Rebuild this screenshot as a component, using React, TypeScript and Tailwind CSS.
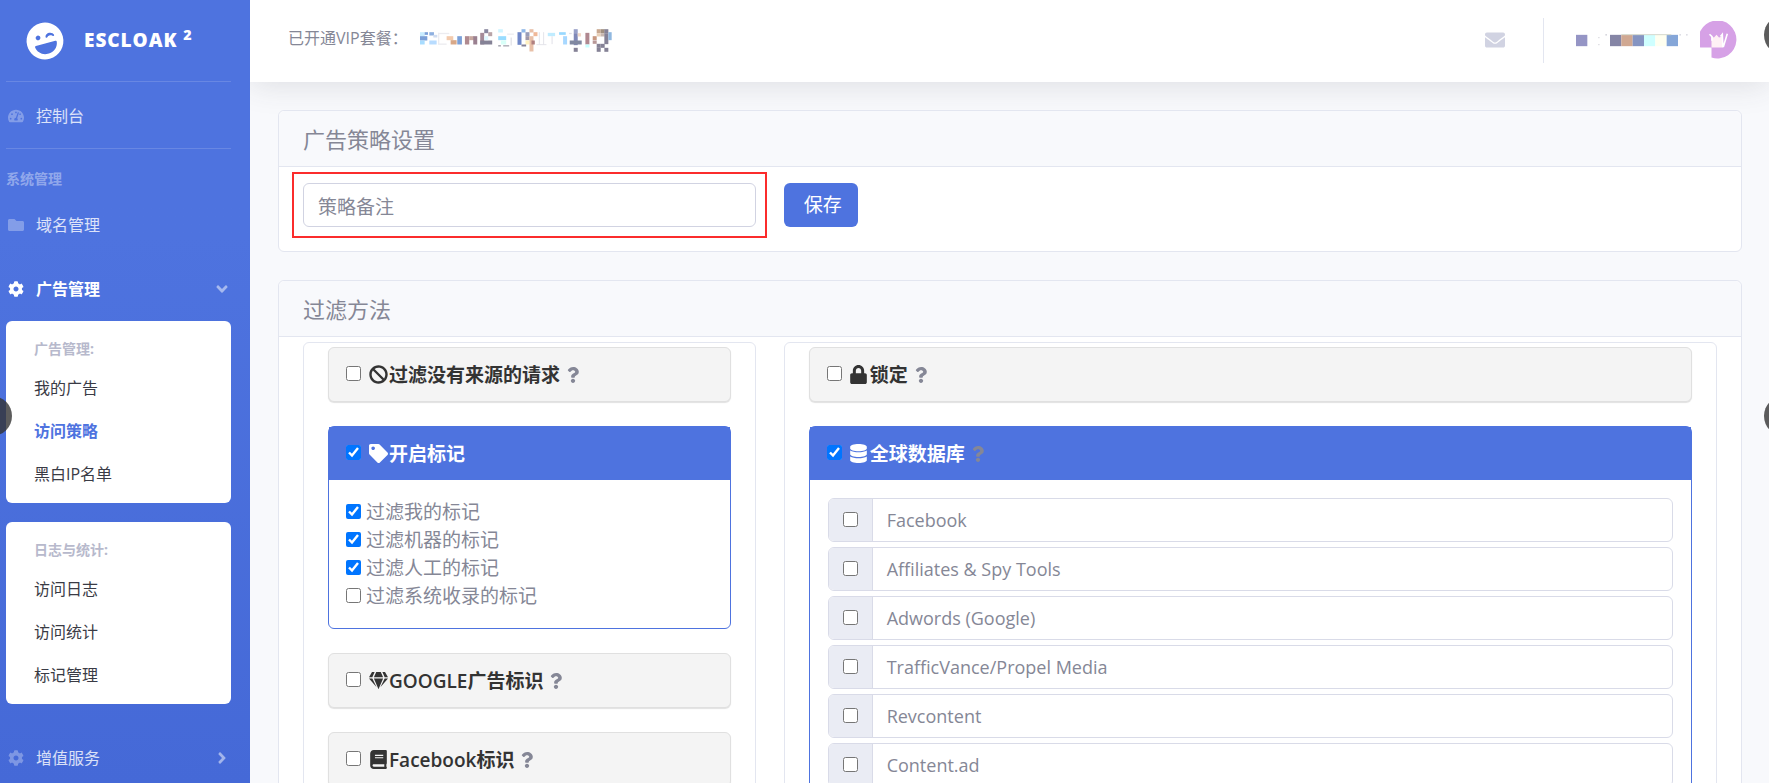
import { useState } from 'react';
import type { ReactNode } from 'react';
import type { IconType } from 'react-icons';
import {
  FaAngleDown,
  FaAngleRight,
  FaBan,
  FaBook,
  FaCog,
  FaDatabase,
  FaEnvelope,
  FaFolder,
  FaGem,
  FaLaughWink,
  FaLock,
  FaQuestion,
  FaTachometerAlt,
  FaTag,
} from 'react-icons/fa';

const databases = [
  'Facebook',
  'Affiliates & Spy Tools',
  'Adwords (Google)',
  'TrafficVance/Propel Media',
  'Revcontent',
  'Content.ad',
];

const markFilters = [
  { id: 'mark-mine', label: '过滤我的标记', checked: true },
  { id: 'mark-bot', label: '过滤机器的标记', checked: true },
  { id: 'mark-human', label: '过滤人工的标记', checked: true },
  { id: 'mark-system', label: '过滤系统收录的标记', checked: false },
];

// [x, y, width, height, color]
type Cell = [number, number, number, number, string];

const planCells: Cell[] = [
  [0, 12, 14, 12, '#c8ecff'], [0, 24, 22, 13, '#7ba0d8'], [0, 37, 14, 12, '#a8dcff'],
  [14, 12, 10, 8, '#7ba0d8'], [28, 12, 14, 10, '#8fb0e0'], [40, 20, 12, 8, '#d0dcf0'], [28, 37, 22, 12, '#b8dcff'],
  [54, 14, 34, 4, '#ececf0'], [54, 14, 4, 34, '#ececf0'], [54, 46, 26, 4, '#ececf0'],
  [80, 24, 20, 12, '#f3cbae'], [92, 36, 18, 13, '#d8a888'], [112, 24, 14, 25, '#7ba0d8'],
  [135, 24, 13, 25, '#b08a90'], [148, 24, 14, 12, '#c8a8a0'], [160, 24, 12, 25, '#9a8090'],
  [193, 3, 12, 12, '#8a88a0'], [181, 14, 12, 35, '#a58b98'], [205, 12, 12, 12, '#b8a4a8'],
  [181, 37, 36, 12, '#858296'], [193, 24, 12, 12, '#e0f8ff'],
  [235, 3, 14, 10, '#d0f4ff'], [235, 24, 24, 12, '#98dcff'], [243, 37, 16, 12, '#d8fff8'],
  [235, 51, 8, 4, '#9a9aa6'], [250, 51, 18, 4, '#a8a8b2'], [262, 16, 20, 4, '#ececf0'], [272, 28, 4, 24, '#e2e2e8'],
  [293, 12, 12, 38, '#7088c8'], [305, 3, 12, 10, '#90b8e8'], [317, 12, 12, 12, '#989cb8'],
  [317, 24, 12, 12, '#a098a8'], [317, 37, 12, 12, '#fff0c0'], [305, 49, 14, 6, '#858296'],
  [329, 3, 12, 10, '#e8c0a8'], [341, 12, 12, 12, '#f0b898'], [329, 24, 12, 46, '#e8c0a8'], [335, 37, 10, 12, '#b08080'],
  [357, 12, 3, 38, '#e4e4ea'], [370, 12, 3, 38, '#e4e4ea'], [350, 48, 30, 3, '#e4e4ea'],
  [384, 14, 22, 10, '#c0ecff'], [418, 12, 20, 8, '#98d8ff'], [430, 24, 12, 25, '#a8d8ff'], [395, 24, 4, 24, '#e8e8ee'],
  [448, 14, 8, 4, '#e2e2e8'], [462, 3, 12, 12, '#98a0c8'], [462, 15, 12, 36, '#8088b8'],
  [450, 37, 36, 12, '#8088a0'], [462, 59, 12, 12, '#858296'], [474, 15, 10, 10, '#f0d8c8'],
  [497, 14, 12, 35, '#b08890'], [497, 49, 12, 9, '#c8ffff'],
  [519, 24, 12, 12, '#c89880'], [531, 3, 12, 12, '#c8a890'], [543, 3, 12, 12, '#a09080'], [554, 3, 12, 12, '#858296'],
  [531, 15, 12, 10, '#e8d0b8'], [519, 37, 12, 10, '#b89898'], [543, 15, 12, 10, '#c8b8b0'],
  [554, 15, 12, 33, '#858296'], [566, 12, 10, 24, '#90b8e0'], [531, 47, 12, 12, '#858296'],
  [543, 47, 12, 12, '#858296'], [531, 59, 12, 12, '#858296'], [554, 59, 12, 12, '#858296'],
];

const nameCells: Cell[] = [
  [0, 2, 34, 34, '#9595c5'],
  [66, 9, 5, 3, '#dcdce0'], [66, 30, 5, 3, '#dcdce0'], [88, 0, 5, 4, '#d0d0d8'],
  [102, 2, 34, 34, '#8585a5'], [136, 2, 34, 34, '#d0a892'], [170, 2, 34, 34, '#8594c2'],
  [204, 2, 34, 34, '#cfffff'], [238, 2, 34, 34, '#fffff0'], [272, 2, 34, 34, '#85a6d8'],
  [136, 0, 150, 3, '#d4d8cc'], [310, 0, 5, 4, '#d8d8e0'], [330, 0, 5, 4, '#d8d8e0'],
];

function Mosaic({ cells, viewBox, className }: { cells: Cell[]; viewBox: string; className: string }) {
  return (
    <svg viewBox={viewBox} className={className} aria-hidden="true">
      {cells.map(([x, y, w, h, fill], i) => (
        <rect key={i} x={x} y={y} width={w} height={h} fill={fill} />
      ))}
    </svg>
  );
}

function Avatar() {
  return (
    <svg viewBox="0 0 38 38" className="size-[38px]" aria-hidden="true">
      <path d="M0.2 26.5A19 19 0 1 1 11.5 36.5V26.5Z" fill="#d6a1e6" />
      <path d="M11.5 15.5L14 16.5L16.5 13.8L19 16.5L22.8 15.5V26.5H11.5Z" fill="#fff0f5" />
      <path d="M9.5 13.2l2.5 2.5v4M20.5 15.5l1.8-2.2 0.6 12.9M27.3 12.8l-4 13.3" fill="none" stroke="#fff" strokeWidth="1.6" />
    </svg>
  );
}

interface NavItemProps {
  icon: IconType;
  label: string;
  active?: boolean;
  arrow?: ReactNode;
}

function NavItem({ icon: Icon, label, active, arrow }: NavItemProps) {
  return (
    <a href="#" className="flex h-16 items-center text-base">
      <span className={active ? 'flex w-5 justify-center text-white' : 'flex w-5 justify-center text-white/30'}>
        <Icon className="h-4 w-auto" />
      </span>
      <span className={active ? 'ml-2.5 flex-1 font-bold text-white' : 'ml-2.5 flex-1 text-white/80'}>{label}</span>
      {arrow}
    </a>
  );
}

function SubMenu({ title, items, current }: { title: string; items: string[]; current?: string }) {
  return (
    <div className="rounded-md bg-white py-2">
      <h6 className="h-[37px] px-7 pt-2 text-sm/6 font-bold text-[#b7b9cc]">{title}</h6>
      {items.map((item) => (
        <a
          key={item}
          href="#"
          className={
            item === current
              ? 'flex h-[43px] items-center px-7 font-bold text-[#4e73df]'
              : 'flex h-[43px] items-center px-7 text-[#3a3b45]'
          }
        >
          {item}
        </a>
      ))}
    </div>
  );
}

function Sidebar() {
  return (
    <nav className="w-[250px] shrink-0 bg-linear-to-b from-[#4e73df] from-30% to-[#4569d7] pr-[19px] pl-1.5">
      <a href="#" className="flex h-[81px] items-center pl-5 text-white">
        <FaLaughWink className="size-[38px] -rotate-15" />
        <span className="ml-5 text-[19px] font-extrabold tracking-wider">
          ESCLOAK <sup>2</sup>
        </span>
      </a>
      <hr className="border-white/15" />
      <div className="pt-0.5">
        <NavItem icon={FaTachometerAlt} label="控制台" />
      </div>
      <hr className="border-white/15" />
      <div className="mt-5 mb-1 text-sm font-bold text-white/40">系统管理</div>
      <NavItem icon={FaFolder} label="域名管理" />
      <NavItem icon={FaCog} label="广告管理" active arrow={<FaAngleDown className="size-[18px] text-white/50" />} />
      <div className="mb-[22px] flex flex-col gap-[19px]">
        <SubMenu title="广告管理:" items={['我的广告', '访问策略', '黑白IP名单']} current="访问策略" />
        <SubMenu title="日志与统计:" items={['访问日志', '访问统计', '标记管理']} />
      </div>
      <NavItem icon={FaCog} label="增值服务" arrow={<FaAngleRight className="size-[18px] text-white/50" />} />
    </nav>
  );
}

function Topbar() {
  return (
    <header className="flex h-[82px] items-center bg-white pr-[31px] pb-0.5 pl-[38px] shadow-[0_2px_32px_rgba(58,59,69,0.15)]">
      <span className="pb-1">已开通VIP套餐：</span>
      <Mosaic cells={planCells} viewBox="0 0 580 74" className="ml-3 h-[25px] w-[193px]" />
      <a href="#" aria-label="消息" className="ml-auto text-[#d1d3e2]">
        <FaEnvelope className="size-5" />
      </a>
      <div className="mr-8 ml-[38px] h-[45px] w-px bg-[#e3e6f0]" />
      <Mosaic cells={nameCells} viewBox="0 0 336 38" className="mr-3 h-[13px] w-28" />
      <Avatar />
    </header>
  );
}

function Card({ title, children }: { title: string; children: ReactNode }) {
  return (
    <section className="rounded-md border border-[#e3e6f0] bg-white">
      <h2 className="rounded-t-md border-b border-[#e3e6f0] bg-[#f8f9fc] px-6 pt-3 pb-[11px] text-[22px]/8">{title}</h2>
      {children}
    </section>
  );
}

interface PanelProps {
  id: string;
  icon: IconType;
  title: string;
  help?: boolean;
  defaultChecked?: boolean;
  children?: ReactNode;
}

function Panel({ id, icon: Icon, title, help, defaultChecked = false, children }: PanelProps) {
  const [checked, setChecked] = useState(defaultChecked);

  return (
    <div
      className={
        checked
          ? 'rounded-md border border-[#4e73df] bg-white'
          : 'rounded-md border border-[#e0e0e0] bg-[#f4f4f4] shadow-[0_1px_1px_rgba(0,0,0,0.12)]'
      }
    >
      <div
        className={
          checked
            ? 'flex h-[53px] items-center bg-[#4e73df] px-[17px] text-white'
            : 'flex h-[53px] items-center px-[17px] text-[#333]'
        }
      >
        <input
          id={id}
          type="checkbox"
          checked={checked}
          onChange={(e) => setChecked(e.target.checked)}
          className="mb-0.5 size-[15px]"
        />
        <label htmlFor={id} className="ml-1.5 flex items-center text-[19px]/7 font-semibold">
          <span className="flex w-[22px] justify-center">
            <Icon className="h-[19px] w-auto" />
          </span>
          {title}
        </label>
        {help && <FaQuestion className="ml-[5px] h-4 w-auto text-[#858796]" />}
      </div>
      {children}
    </div>
  );
}

export default function App() {
  const [remark, setRemark] = useState('');

  return (
    <div className="relative flex h-screen overflow-hidden bg-[#f8f9fc] font-['Open_Sans','Noto_Sans_CJK_SC',sans-serif] text-base text-[#858796]">
      <Sidebar />
      <div className="min-w-0 flex-1 overflow-hidden">
        <Topbar />
        <main className="flex flex-col gap-7 pt-7 pr-[27px] pl-7">
          <Card title="广告策略设置">
            <div className="grid grid-cols-12 gap-7 px-6 pt-4 pb-6">
              <div className="relative col-span-4">
                <input
                  type="text"
                  aria-label="策略备注"
                  placeholder="策略备注"
                  value={remark}
                  onChange={(e) => setRemark(e.target.value)}
                  className="block h-11 w-full rounded-md border border-[#d1d3e2] bg-white px-3.5 pt-1 text-[19px] placeholder:text-[#858796]"
                />
                <div className="pointer-events-none absolute -inset-x-[11px] -inset-y-[11px] border-2 border-[#fb2c2c]" />
              </div>
              <div className="col-span-8">
                <button type="button" className="h-11 rounded-md bg-[#4e73df] pr-4 pl-5 text-[19px] text-white">
                  保存
                </button>
              </div>
            </div>
          </Card>

          <Card title="过滤方法">
            <div className="grid grid-cols-12 gap-7 px-6 pt-[5px] pb-6">
              <div className="col-span-4 flex flex-col gap-6 rounded-md border border-[#e3e6f0] px-6 pt-1 pb-6">
                <Panel id="no-referer" icon={FaBan} title="过滤没有来源的请求" help />
                <Panel id="mark" icon={FaTag} title="开启标记" defaultChecked>
                  <div className="px-[17px] py-[18px]">
                    {markFilters.map((item) => (
                      <div key={item.id} className="flex h-7 items-center gap-[5px] text-[19px]">
                        <input id={item.id} type="checkbox" defaultChecked={item.checked} className="mb-0.5 size-[15px]" />
                        <label htmlFor={item.id}>{item.label}</label>
                      </div>
                    ))}
                  </div>
                </Panel>
                <Panel id="google" icon={FaGem} title="GOOGLE广告标识" help />
                <Panel id="facebook" icon={FaBook} title="Facebook标识" help />
              </div>

              <div className="col-span-8 flex flex-col gap-6 rounded-md border border-[#e3e6f0] px-6 pt-1 pb-6">
                <Panel id="lock" icon={FaLock} title="锁定" help />
                <Panel id="global-db" icon={FaDatabase} title="全球数据库" help defaultChecked>
                  <div className="flex flex-col gap-[5px] px-[18px] py-[18px]">
                    {databases.map((name, i) => (
                      <div key={name} className="flex h-11 overflow-hidden rounded-md border border-[#d9dbe8]">
                        <div className="flex w-11 items-center justify-center border-r border-[#d9dbe8] bg-[#eaecf4]">
                          <input id={`db-${i}`} type="checkbox" className="mb-0.5 size-[15px]" />
                        </div>
                        <label htmlFor={`db-${i}`} className="flex flex-1 items-center pl-3.5 text-lg">
                          {name}
                        </label>
                      </div>
                    ))}
                  </div>
                </Panel>
              </div>
            </div>
          </Card>
        </main>
      </div>

      {/* edge handles, mostly off screen */}
      <div className="absolute top-[396px] -left-7 size-10 rounded-full bg-[#333]/80" />
      <div className="absolute top-[15px] -right-[35px] size-10 rounded-full bg-[#333]/80" />
      <div className="absolute top-[396px] -right-[35px] size-10 rounded-full bg-[#333]/80" />
    </div>
  );
}
